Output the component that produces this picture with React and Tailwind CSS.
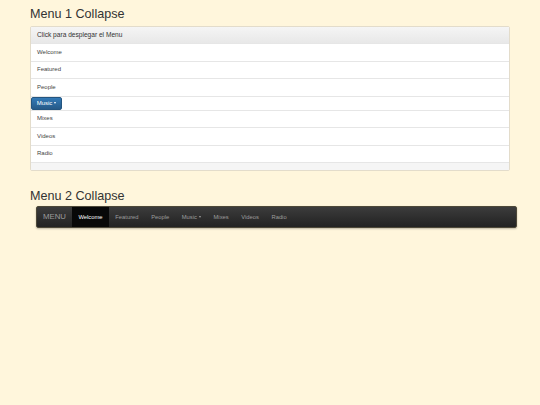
// Two collapse menus, Bootstrap-ish look at a small scale
const ITEMS_TOP = ["Welcome", "Featured", "People"];
const ITEMS_BOTTOM = ["Mixes", "Videos", "Radio"];
const NAV = ["Featured", "People"];
const NAV_END = ["Mixes", "Videos", "Radio"];

function Caret({ color = "border-t-white" }) {
  return (
    <span
      className={`inline-block w-0 h-0 ml-[2px] align-middle border-t-[2px] border-x-[1.5px] border-x-transparent ${color}`}
    />
  );
}

function Row({ label }) {
  return (
    <div className="h-[17.5px] border-t border-[#e6e6e6] flex items-center px-[6px] text-[6px] text-[#444]">
      {label}
    </div>
  );
}

export default function App() {
  return (
    <div
      className="min-h-[405px] w-[540px] bg-[#fff6dc] pt-[7px] pl-[30px]"
      style={{ fontFamily: '"Liberation Sans", Arial, sans-serif' }}
    >
      <h1 className="text-[12.6px] leading-[14px] text-[#333] mb-[5px]">Menu 1 Collapse</h1>

      {/* panel with list */}
      <div className="w-[480px] border border-[#e3dccb] rounded-[2px] bg-white overflow-hidden">
        <div className="h-[16px] flex items-center px-[6px] text-[6.6px] text-[#333] bg-gradient-to-b from-[#f5f5f5] to-[#e8e8e8]">
          Click para desplegar el Menu
        </div>
        {ITEMS_TOP.map((it) => (
          <Row key={it} label={it} />
        ))}
        <div className="h-[14px] border-t border-[#e6e6e6] flex items-stretch">
          <button className="w-[31px] h-full rounded-[2px] border border-[#245580] bg-gradient-to-b from-[#337ab7] to-[#265a88] text-white text-[6px] flex items-center justify-center">
            Music
            <Caret />
          </button>
        </div>
        {ITEMS_BOTTOM.map((it) => (
          <Row key={it} label={it} />
        ))}
        <div className="h-[8px] border-t border-[#e6e6e6] bg-[#f5f5f5]" />
      </div>

      <h1 className="text-[12.6px] leading-[14px] text-[#333] mt-[18px] mb-[3px]">Menu 2 Collapse</h1>

      {/* inverse navbar */}
      <div className="ml-[6px] w-[481px] h-[22px] rounded-[2px] border border-[#4d4838] bg-gradient-to-b from-[#3c3c3c] to-[#222] flex items-stretch pl-[6px] shadow-[0_1px_2px_rgba(0,0,0,0.25)]">
        <div className="flex items-center text-[7.8px] text-[#9d9d9d] pr-[6px]">MENU</div>
        <div className="flex items-center bg-[#080808] text-white text-[5.8px] px-[6.5px]">Welcome</div>
        {NAV.map((it) => (
          <div key={it} className="flex items-center text-[#9d9d9d] text-[5.8px] px-[6.3px]">
            {it}
          </div>
        ))}
        <div className="flex items-center text-[#9d9d9d] text-[5.8px] px-[6.3px]">
          Music
          <Caret color="border-t-[#9d9d9d]" />
        </div>
        {NAV_END.map((it) => (
          <div key={it} className="flex items-center text-[#9d9d9d] text-[5.8px] px-[6.3px]">
            {it}
          </div>
        ))}
      </div>
    </div>
  );
}
